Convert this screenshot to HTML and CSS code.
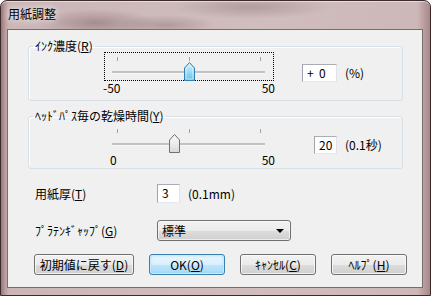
FILE: index.html
```html
<!DOCTYPE html>
<html lang="ja">
<head>
    <meta charset="UTF-8">
    <title>用紙調整</title>
    <link rel="stylesheet" href="styles.css">
</head>
<body>
    <div class="window">
        <div class="titlebar"><span class="title">用紙調整</span></div>
        <div class="client">
            <fieldset class="group group-ink">
                <legend>ｲﾝｸ濃度(<u>R</u>)</legend>
                <div class="group-row">
                    <div class="slider-wrap">
                        <div class="slider focused">
                            <span class="tick tick-min"></span>
                            <span class="tick tick-mid"></span>
                            <span class="tick tick-max"></span>
                            <span class="track"></span>
                            <svg class="thumb" style="left: 80px" width="11" height="19" viewBox="0 0 11 19">
                                <defs>
                                    <linearGradient id="thumbBlue" x1="0" y1="0" x2="0" y2="1">
                                        <stop offset="0" stop-color="#d8f3fd"/>
                                        <stop offset="0.5" stop-color="#9fdcf6"/>
                                        <stop offset="1" stop-color="#5dc0ec"/>
                                    </linearGradient>
                                </defs>
                                <path d="M0.5 6 L5.5 0.5 L10.5 6 L10.5 18.5 L0.5 18.5 Z" fill="url(#thumbBlue)" stroke="#2f7fb4"/>
                                <path d="M2 7 L5.5 3 L9 7 L9 17 L2 17 Z" fill="none" stroke="#e6f8ff" stroke-opacity="0.7"/>
                            </svg>
                        </div>
                        <div class="scale"><span>-50</span><span>50</span></div>
                    </div>
                    <div class="value-cell">
                        <div class="edit edit-wide">+&nbsp;&nbsp;0</div>
                    </div>
                    <span class="unit">(%)</span>
                </div>
            </fieldset>

            <fieldset class="group group-dry">
                <legend>ﾍｯﾄﾞﾊﾟｽ毎の乾燥時間(<u>Y</u>)</legend>
                <div class="group-row">
                    <div class="slider-wrap">
                        <div class="slider">
                            <span class="tick tick-min"></span>
                            <span class="tick tick-mid"></span>
                            <span class="tick tick-max"></span>
                            <span class="track"></span>
                            <svg class="thumb" style="left: 65px" width="11" height="19" viewBox="0 0 11 19">
                                <defs>
                                    <linearGradient id="thumbGray" x1="0" y1="0" x2="0" y2="1">
                                        <stop offset="0" stop-color="#fbfbfb"/>
                                        <stop offset="0.5" stop-color="#ececec"/>
                                        <stop offset="1" stop-color="#d7d7d7"/>
                                    </linearGradient>
                                </defs>
                                <path d="M0.5 6 L5.5 0.5 L10.5 6 L10.5 18.5 L0.5 18.5 Z" fill="url(#thumbGray)" stroke="#707070"/>
                            </svg>
                        </div>
                        <div class="scale scale-zero"><span>0</span><span>50</span></div>
                    </div>
                    <div class="value-cell">
                        <div class="edit edit-narrow">20</div>
                    </div>
                    <span class="unit">(0.1秒)</span>
                </div>
            </fieldset>

            <div class="field-row row-thick">
                <span class="field-label">用紙厚(<u>T</u>)</span>
                <div class="field-control">
                    <div class="edit edit-small">3</div>
                    <span class="unit">(0.1mm)</span>
                </div>
            </div>

            <div class="field-row row-platen">
                <span class="field-label">ﾌﾟﾗﾃﾝｷﾞｬｯﾌﾟ(<u>G</u>)</span>
                <div class="field-control">
                    <div class="combo">
                        <span>標準</span>
                        <span class="combo-arrow"></span>
                    </div>
                </div>
            </div>

            <div class="buttons">
                <button type="button" class="btn btn-reset">初期値に戻す(<u>D</u>)</button>
                <button type="button" class="btn btn-default">OK(<u>O</u>)</button>
                <button type="button" class="btn">ｷｬﾝｾﾙ(<u>C</u>)</button>
                <button type="button" class="btn">ﾍﾙﾌﾟ(<u>H</u>)</button>
            </div>
        </div>
    </div>
</body>
</html>
```

FILE: styles.css
```css
* {
    box-sizing: border-box;
}

body {
    margin: 0;
    font-family: "Noto Sans CJK JP", sans-serif;
    font-size: 12px;
    color: #000;
}

.window {
    width: 431px;
    height: 296px;
    border: 1px solid #3a2b2d;
    border-radius: 7px 7px 0 0;
    padding: 0 7px 7px 6px;
    display: flex;
    flex-direction: column;
    background:
        radial-gradient(ellipse 60px 14px at 95px 22px, rgba(90, 60, 62, 0.35), transparent),
        radial-gradient(ellipse 50px 10px at 165px 24px, rgba(110, 80, 82, 0.3), transparent),
        radial-gradient(ellipse 80px 12px at 250px 6px, rgba(90, 60, 62, 0.25), transparent),
        linear-gradient(to right, #9b7577 0, #b89c9d 4px, #cbb6b7 8px, #d0bdbe 60%, #cdb8b9 97%, #a88687 100%);
    box-shadow: inset 0 1px 0 rgba(255, 255, 255, 0.5);
}

.titlebar {
    height: 28px;
    padding: 5px 0 0 1px;
    line-height: 16px;
}

.title {
    font-size: 12px;
    text-shadow: 0 0 6px rgba(255, 255, 255, 0.8), 0 0 10px rgba(255, 255, 255, 0.6);
}

.client {
    flex: 1;
    background: #f0f0f0;
    border: 1px solid #7a6b6c;
    padding: 10px 0 0 20px;
}

/* group boxes */
.group {
    width: 375px;
    margin: 0;
    padding: 0;
    border: 1px solid #d5dfe5;
    border-radius: 3px;
    box-shadow: inset 1px 1px 0 #fff;
}

.group legend {
    margin-left: 4px;
    padding: 0 2px;
    line-height: 12px;
}

.group-ink {
    padding-bottom: 5px;
}

.group-dry {
    margin-top: 9px;
    padding-bottom: 1px;
}

.group-dry .group-row {
    padding-top: 2px;
}

.group-row {
    display: flex;
    align-items: flex-start;
    padding-left: 75px;
}

.slider-wrap {
    width: 170px;
}

.slider {
    position: relative;
    height: 29px;
    border: 1px solid transparent;
}

.slider.focused {
    border: 1px dotted #000;
}

.tick {
    position: absolute;
    top: 4px;
    width: 1px;
    height: 4px;
    background: #a5a5a5;
}

.tick-min { left: 12px; }
.tick-mid { left: 84px; }
.tick-max { left: 155px; }

.track {
    position: absolute;
    top: 18px;
    left: 7px;
    width: 153px;
    height: 3px;
    background: #c2c2c2;
    border-bottom: 1px solid #f8f8f8;
}

.thumb {
    position: absolute;
    top: 9px;
    margin-left: -1px;
}

.scale {
    display: flex;
    justify-content: space-between;
    margin: 0 -1px;
    line-height: 14px;
    height: 14px;
}

.scale-zero {
    padding-left: 7px;
}

.value-cell {
    width: 63px;
    display: flex;
    justify-content: flex-end;
    padding-top: 12px;
}

.unit {
    margin-left: 8px;
    line-height: 18px;
}

.group-row > .unit {
    margin-top: 12px;
}

.edit {
    height: 18px;
    line-height: 16px;
    padding-left: 4px;
    background: #fff;
    border: 1px solid;
    border-color: #abadb3 #e2e3ea #e3e9ef #a0a3ab;
}

.edit-wide {
    width: 35px;
}

.edit-narrow {
    width: 23px;
}

/* plain rows */
.field-row {
    display: flex;
    align-items: center;
    padding-left: 7px;
}

.field-label {
    width: 122px;
}

.field-control {
    display: flex;
    align-items: center;
}

.row-thick {
    margin-top: 15px;
    height: 19px;
}

.edit-small {
    width: 23px;
    height: 19px;
}

.row-platen {
    margin-top: 17px;
    height: 21px;
}

.combo {
    width: 134px;
    height: 21px;
    display: flex;
    align-items: center;
    justify-content: space-between;
    padding: 0 6px 0 4px;
    border: 1px solid #707070;
    border-radius: 3px;
    background: linear-gradient(to bottom, #f2f2f2 0, #ebebeb 50%, #dddddd 50%, #cfcfcf 100%);
    box-shadow: inset 0 0 0 1px rgba(255, 255, 255, 0.6);
}

.combo-arrow {
    width: 0;
    height: 0;
    border-left: 4px solid transparent;
    border-right: 4px solid transparent;
    border-top: 4px solid #000;
}

/* buttons */
.buttons {
    display: flex;
    gap: 15px;
    margin-top: 13px;
    padding-left: 6px;
}

.btn {
    width: 76px;
    height: 21px;
    padding: 0;
    font-family: inherit;
    font-size: 12px;
    line-height: 19px;
    color: #000;
    border: 1px solid #707070;
    border-radius: 3px;
    background: linear-gradient(to bottom, #f2f2f2 0, #ebebeb 50%, #dddddd 50%, #cfcfcf 100%);
    box-shadow: inset 0 0 0 1px rgba(255, 255, 255, 0.7);
}

.btn-reset {
    width: 100px;
}

.btn-default {
    border-color: #3c7fb1;
    background: linear-gradient(to bottom, #eaf6fd 0, #d9f0fc 50%, #bee6fd 50%, #a7d9f5 100%);
    box-shadow: inset 0 0 0 1px #c6eaff, inset 0 0 3px #6fc8f6;
}
```
